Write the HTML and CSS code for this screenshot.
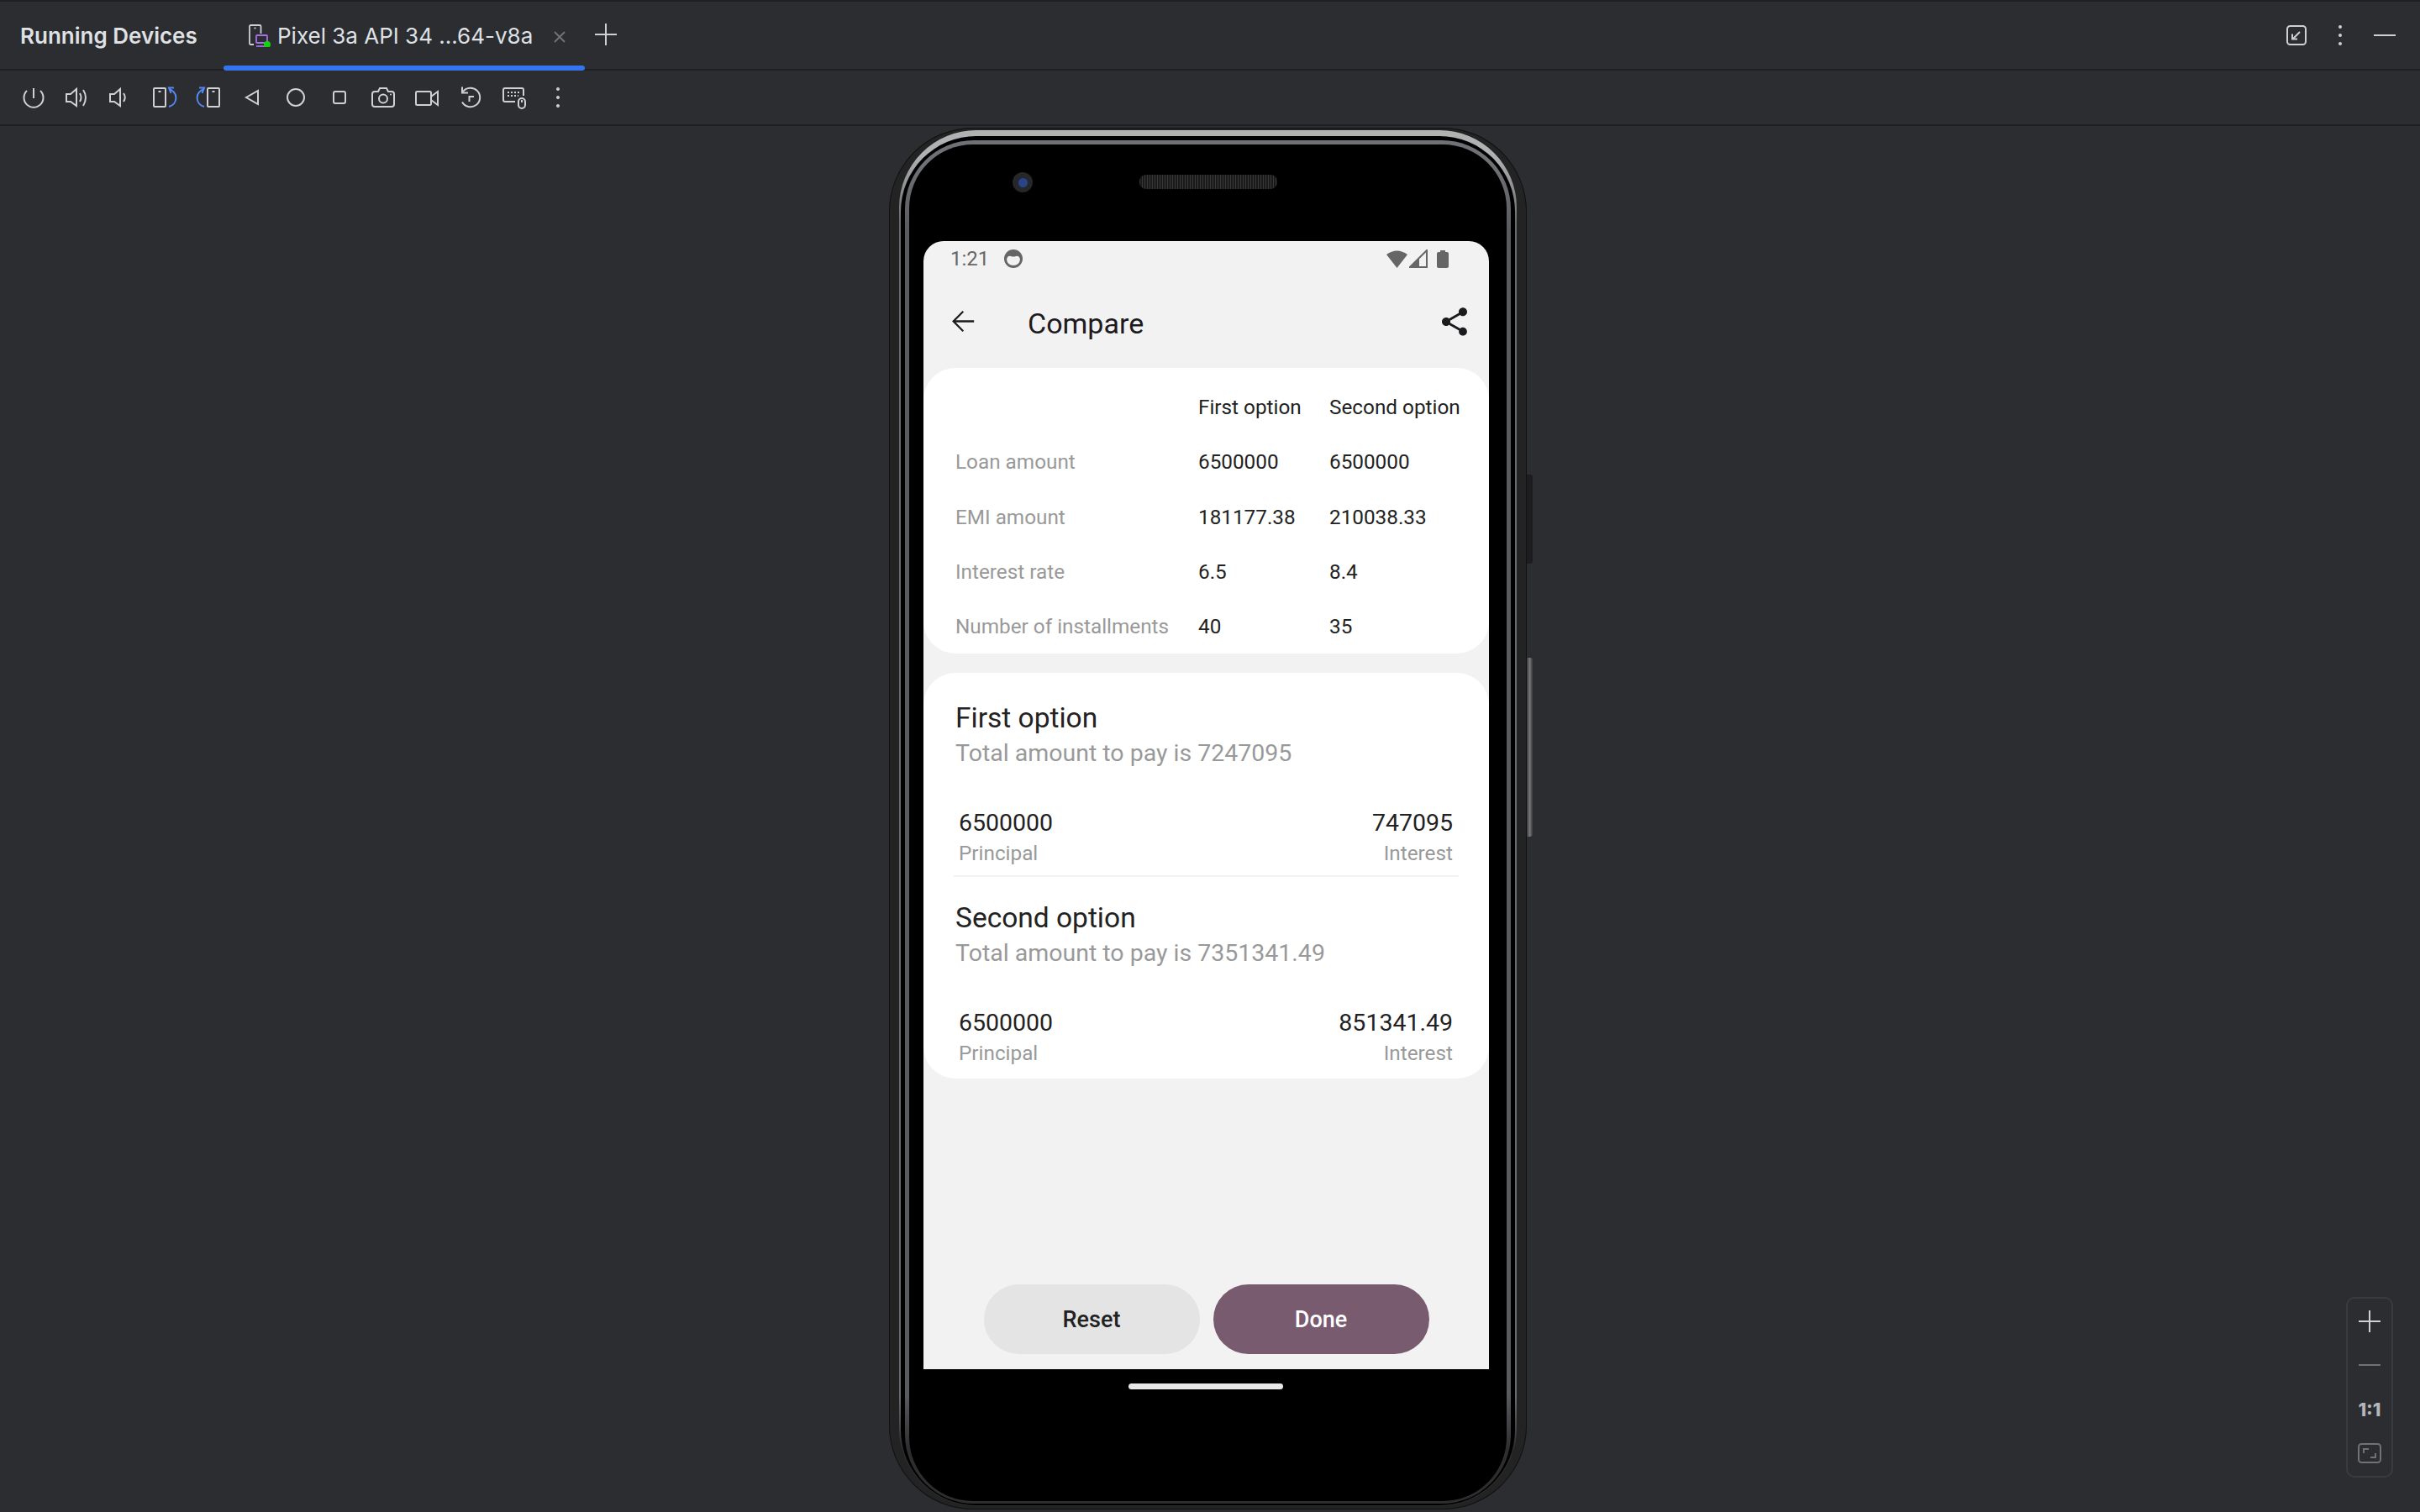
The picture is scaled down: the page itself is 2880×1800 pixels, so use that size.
FILE: index.html
```html
<!DOCTYPE html>
<html lang="en">
<head>
    <meta charset="UTF-8">
    <title>Running Devices</title>
    <link rel="stylesheet" href="styles.css">
</head>
<body>
    <header class="tabbar">
        <div class="tool-title">Running Devices</div>
        <div class="tab">
            <svg class="tab-icon" width="28" height="28" viewBox="0 0 28 28">
                <path class="ico thin" d="M8 25H4.500Q3 25 3 23.500V3.500Q3 2 4.500 2H15Q16.500 2 16.500 3.500V12"/>
                <path class="ico thin" d="M8.500 5.500H10.500"/>
                <rect class="ico thin purple" x="11" y="14" width="13" height="9" rx="1"/>
                <path class="ico thin purple" d="M11 27H21"/>
                <circle class="green-dot" cx="24" cy="25" r="4"/>
            </svg>
            <span class="tab-name">Pixel 3a API 34 ...64-v8a</span>
            <svg class="tab-close" width="18" height="18" viewBox="0 0 18 18"><path d="M3 3L15 15M15 3L3 15"/></svg>
        </div>
        <svg class="tab-add" width="26" height="26" viewBox="0 0 26 26"><path class="ico" d="M13 0V26M0 13H26"/></svg>
        <div class="tabbar-right">
            <svg width="24" height="24" viewBox="0 0 24 24">
                <rect class="ico" x="1" y="1" width="22" height="22" rx="3.500"/>
                <path class="ico" d="M16 8L7.500 16.500M7 10.500V16.500H13"/>
            </svg>
            <svg class="dots-small" width="8" height="26" viewBox="0 0 8 26"><circle cx="4" cy="3" r="2"/><circle cx="4" cy="13" r="2"/><circle cx="4" cy="23" r="2"/></svg>
            <svg width="26" height="4" viewBox="0 0 26 4"><path class="ico" d="M0 2H26"/></svg>
        </div>
    </header>

    <nav class="toolbar">
        <div class="tool"><svg viewBox="0 0 40 40"><path class="ico" d="M12 12A11.500 11.500 0 1 0 28 12M20 9V21"/></svg></div>
        <div class="tool"><svg viewBox="0 0 40 40"><path class="ico" d="M7 16H12L19 10V30L12 25H7Z"/><path class="ico" d="M23 15Q26 20 23 25M27 11Q33 20 27 30"/></svg></div>
        <div class="tool"><svg viewBox="0 0 40 40"><path class="ico" d="M7 16H12L19 10V30L12 25H7Z"/><path class="ico" d="M23 15Q26.500 20 23 25"/></svg></div>
        <div class="tool"><svg viewBox="0 0 40 40">
            <rect class="ico" x="7" y="9" width="14" height="22" rx="1"/><path class="ico" d="M12.500 13H15.500"/>
            <path class="ico blue" d="M25 10A12 11 0 0 1 25 31M31 8.500H25L27.500 15"/>
        </svg></div>
        <div class="tool"><svg viewBox="0 0 40 40"><g transform="matrix(-1 0 0 1 40 0)">
            <rect class="ico" x="7" y="9" width="14" height="22" rx="1"/><path class="ico" d="M12.500 13H15.500"/>
            <path class="ico blue" d="M25 10A12 11 0 0 1 25 31M31 8.500H25L27.500 15"/>
        </g></svg></div>
        <div class="tool"><svg viewBox="0 0 40 40"><path class="ico" d="M27 12V28L13 20Z"/></svg></div>
        <div class="tool"><svg viewBox="0 0 40 40"><circle class="ico" cx="20" cy="20" r="10"/></svg></div>
        <div class="tool"><svg viewBox="0 0 40 40"><rect class="ico" x="13" y="13" width="14" height="14" rx="2"/></svg></div>
        <div class="tool"><svg viewBox="0 0 40 40">
            <path class="ico" d="M14 13L16 9H24L26 13H30Q33 13 33 16V28Q33 31 30 31H10Q7 31 7 28V16Q7 13 10 13Z"/>
            <circle class="ico" cx="20" cy="21.500" r="5"/><circle class="dot-fill" cx="29" cy="16.500" r="1"/>
        </svg></div>
        <div class="tool"><svg viewBox="0 0 40 40"><rect class="ico" x="7" y="13" width="18" height="16" rx="1.500"/><path class="ico" d="M25 19L33 13V29L25 23"/></svg></div>
        <div class="tool"><svg viewBox="0 0 40 40"><path class="ico" d="M11 13A11.300 11.300 0 1 1 10 25.500M10 7.500V14.500H17M18.500 25V19H24"/></svg></div>
        <div class="tool"><svg viewBox="0 0 40 40">
            <path class="ico" d="M21 25H9Q7 25 7 23V11Q7 9 9 9H29Q31 9 31 11V18"/>
            <path class="ico dashed" d="M12 14H27M12 18H25"/>
            <rect class="ico" x="25" y="21" width="8" height="12" rx="4"/><path class="ico" d="M29 23V26"/>
        </svg></div>
        <div class="tool"><svg viewBox="0 0 40 40"><circle class="dot-fill" cx="20" cy="10" r="2"/><circle class="dot-fill" cx="20" cy="20" r="2"/><circle class="dot-fill" cx="20" cy="30" r="2"/></svg></div>
    </nav>

    <main class="device-area">
        <div class="phone">
            <div class="side-btn power"></div>
            <div class="side-btn volume"></div>
            <div class="rim">
                <div class="gap">
                    <div class="bevel">
                        <div class="face">
                            <div class="earpiece">
                                <div class="camera"><div class="lens"></div></div>
                                <div class="speaker"></div>
                            </div>

                            <div class="screen">
                                <div class="statusbar">
                                    <span class="clock">1:21</span>
                                    <svg class="face-icon" width="24" height="24" viewBox="0 0 24 24">
                                        <circle cx="12" cy="12" r="11" fill="#666"/>
                                        <path d="M4 13Q5 8 9 9Q12 10 15 9Q19 8 20 13Q19 20 12 20Q5 20 4 13Z" fill="#f2f2f2"/>
                                    </svg>
                                    <div class="status-right">
                                        <svg width="26" height="21" viewBox="0 0 26 21"><path d="M0 5Q12.500 -4 25 5L12.500 21Z" fill="#666"/></svg>
                                        <svg width="22" height="22" viewBox="0 0 22 22"><path d="M21 1V21H1Z" fill="none" stroke="#666" stroke-width="2"/><path d="M12 10V21H1Z" fill="#666"/></svg>
                                        <svg class="battery" width="14" height="21" viewBox="0 0 14 21"><path d="M4 2V0H10V2H12Q14 2 14 4V19Q14 21 12 21H2Q0 21 0 19V4Q0 2 2 2Z" fill="#666"/></svg>
                                    </div>
                                </div>

                                <div class="appbar">
                                    <svg class="back" width="41" height="41" viewBox="0 0 24 24"><path d="M20 11.200H7.300l5.600-5.600L12 4.700 4.700 12l7.300 7.300.9-.9-5.600-5.600H20z"/></svg>
                                    <div class="appbar-title">Compare</div>
                                    <svg class="share" width="40" height="40" viewBox="0 0 24 24"><path d="M18 16.080c-.76 0-1.440.3-1.960.77L8.910 12.700c.05-.23.09-.46.09-.7s-.04-.47-.09-.7l7.050-4.110c.54.5 1.250.81 2.040.81 1.660 0 3-1.340 3-3s-1.340-3-3-3-3 1.340-3 3c0 .24.04.47.09.7L8.040 9.810C7.500 9.310 6.790 9 6 9c-1.660 0-3 1.340-3 3s1.340 3 3 3c.79 0 1.500-.31 2.040-.81l7.120 4.160c-.05.21-.08.43-.08.65 0 1.610 1.310 2.920 2.920 2.920 1.610 0 2.920-1.310 2.920-2.920s-1.310-2.920-2.920-2.920z"/></svg>
                                </div>

                                <section class="card compare-table">
                                    <div></div><div class="val">First option</div><div class="val">Second option</div>
                                    <div class="lbl">Loan amount</div><div class="val">6500000</div><div class="val">6500000</div>
                                    <div class="lbl">EMI amount</div><div class="val">181177.38</div><div class="val">210038.33</div>
                                    <div class="lbl">Interest rate</div><div class="val">6.5</div><div class="val">8.4</div>
                                    <div class="lbl">Number of installments</div><div class="val">40</div><div class="val">35</div>
                                </section>

                                <section class="card breakdown">
                                    <div class="option">
                                        <div class="option-title">First option</div>
                                        <div class="option-total">Total amount to pay is 7247095</div>
                                        <div class="split">
                                            <div><div class="split-val">6500000</div><div class="split-lbl">Principal</div></div>
                                            <div class="split-end"><div class="split-val">747095</div><div class="split-lbl">Interest</div></div>
                                        </div>
                                    </div>
                                    <div class="divider"></div>
                                    <div class="option">
                                        <div class="option-title">Second option</div>
                                        <div class="option-total">Total amount to pay is 7351341.49</div>
                                        <div class="split">
                                            <div><div class="split-val">6500000</div><div class="split-lbl">Principal</div></div>
                                            <div class="split-end"><div class="split-val">851341.49</div><div class="split-lbl">Interest</div></div>
                                        </div>
                                    </div>
                                </section>

                                <div class="actions">
                                    <div class="btn btn-reset">Reset</div>
                                    <div class="btn btn-done">Done</div>
                                </div>
                            </div>

                            <div class="home-handle"></div>
                        </div>
                    </div>
                </div>
            </div>
        </div>

        <div class="zoom-panel">
            <svg width="26" height="26" viewBox="0 0 26 26"><path class="ico" d="M13 0V26M0 13H26"/></svg>
            <svg class="zoom-minus" width="26" height="2" viewBox="0 0 26 2"><path class="ico muted" d="M0 1H26"/></svg>
            <div class="zoom-actual">1:1</div>
            <svg class="zoom-fit" width="28" height="24" viewBox="0 0 28 24">
                <rect class="ico muted" x="1" y="1" width="26" height="22" rx="3.500"/>
                <path class="ico muted" d="M7 12V7H13M15 17H21V12"/>
            </svg>
        </div>
    </main>
</body>
</html>
```

FILE: styles.css
```css
* {
    box-sizing: border-box;
}

html, body {
    margin: 0;
    height: 100%;
    overflow: hidden;
}

body {
    background: #2b2d30;
    color: #dfe1e5;
    font-family: 'Inter', sans-serif;
    border-top: 2px solid #1e1f22;
}

/* svg strokes */
.ico {
    fill: none;
    stroke: #ced0d6;
    stroke-width: 2;
}

.ico.thin {
    stroke-width: 1.800;
}

.ico.blue {
    stroke: #548af7;
}

.ico.purple {
    stroke: #a571e6;
}

.ico.muted {
    stroke: #6f7277;
}

.ico.dashed {
    stroke-dasharray: 2 2;
}

.dot-fill, .dots-small circle {
    fill: #ced0d6;
}

.green-dot {
    fill: #0fd40f;
}

/* tab row */
.tabbar {
    display: flex;
    align-items: center;
    height: 82px;
    padding-left: 24px;
    border-bottom: 2px solid #1e1f22;
}

.tool-title {
    width: 242px;
    font-size: 26px;
    font-weight: 600;
}

.tab {
    position: relative;
    display: flex;
    align-items: center;
    width: 430px;
    height: 80px;
    padding-left: 28px;
}

.tab::after {
    content: "";
    position: absolute;
    left: 0;
    right: 0;
    bottom: -2px;
    height: 6px;
    border-radius: 3px;
    background: #3574f0;
}

.tab-name {
    margin-left: 8px;
    font-size: 26px;
    white-space: nowrap;
}

.tab-close {
    margin-left: 23px;
    margin-top: 4px;
}

.tab-close path {
    fill: none;
    stroke: #6f737a;
    stroke-width: 2;
}

.tab-add {
    margin-left: 12px;
    margin-top: -2px;
}

.tabbar-right {
    display: flex;
    align-items: center;
    gap: 36px;
    margin-left: auto;
    padding-right: 29px;
}

/* icon row */
.toolbar {
    display: flex;
    align-items: center;
    height: 66px;
    padding-left: 14px;
    border-bottom: 2px solid #1e1f22;
}

.tool {
    display: flex;
    justify-content: center;
    width: 52px;
}

.tool svg {
    width: 40px;
    height: 40px;
}

/* device */
.device-area {
    position: relative;
    display: flex;
    justify-content: center;
    height: 1650px;
    padding-top: 2px;
    padding-right: 5px;
}

.phone {
    position: relative;
    width: 759px;
    height: 1645px;
    padding: 3px 12px 4px;
    background: #232324;
    border-radius: 100px;
    box-shadow: inset 0 0 0 1px #111;
}

.side-btn {
    position: absolute;
    left: 759px;
    width: 7px;
    border-radius: 0 3px 3px 0;
}

.side-btn.power {
    top: 413px;
    height: 106px;
    background: #1d1d1f;
}

.side-btn.volume {
    top: 631px;
    height: 213px;
    background: linear-gradient(to right, #38383a, #77777a 50%, #38383a);
}

.rim {
    height: 100%;
    padding: 7px 2px 1px;
    background: linear-gradient(to bottom, #b0b1b3 0, #b0b1b3 30px, #6a6b6e 110px, #6a6b6e 92%, #2a2a2c 96%);
    border-radius: 92px;
}

.gap {
    height: 100%;
    padding: 5px 5px 2px;
    background: #000;
    border-radius: 90px;
}

.bevel {
    height: 100%;
    padding: 5px 5px 3px;
    background: linear-gradient(to bottom, #707176 0, #707176 30px, #5a5b5f 110px, #5a5b5f 92%, #2e2e30 96%);
    border-radius: 82px;
}

.face {
    display: flex;
    flex-direction: column;
    height: 100%;
    padding: 0 21px 0 17px;
    background: #000;
    border-radius: 76px;
}

.earpiece {
    position: relative;
    height: 115px;
    flex-shrink: 0;
}

.camera {
    position: absolute;
    left: 106px;
    top: 33px;
    display: flex;
    align-items: center;
    justify-content: center;
    width: 24px;
    height: 24px;
    border-radius: 50%;
    background: #26272b;
}

.lens {
    width: 11px;
    height: 11px;
    border-radius: 50%;
    background: #2a4488;
}

.speaker {
    position: absolute;
    left: 257px;
    top: 36px;
    width: 164px;
    height: 17px;
    border-radius: 8px;
    background: repeating-linear-gradient(90deg, #383838 0 1px, #1a1a1a 1px 3px);
}

/* app */
.screen {
    display: flex;
    flex-direction: column;
    height: 1343px;
    flex-shrink: 0;
    background: #f2f2f2;
    border-radius: 24px 24px 0 0;
    font-family: 'Roboto', sans-serif;
    color: #1d1b1e;
}

.statusbar {
    display: flex;
    align-items: center;
    height: 42px;
    padding: 0 48px 0 32px;
    color: #666;
}

.clock {
    font-size: 24px;
}

.face-icon {
    margin-left: 17px;
}

.status-right {
    display: flex;
    align-items: center;
    gap: 1px;
    margin-left: auto;
}

.battery {
    margin-left: 10px;
}

.appbar {
    display: flex;
    align-items: center;
    height: 109px;
    padding: 0 21px 0 26px;
}

.back {
    margin-top: -3px;
    fill: #1d1b1e;
}

.share {
    margin-top: -2px;
    margin-left: auto;
    fill: #1d1b1e;
}

.appbar-title {
    margin-left: 57px;
    font-size: 34px;
    line-height: 42px;
    margin-top: 3px;
}

.card {
    background: #fff;
    border-radius: 38px;
}

.compare-table {
    display: grid;
    grid-template-columns: 289px 156px 1fr;
    grid-auto-rows: 65.300px;
    align-items: center;
    height: 340px;
    padding: 14px 0 0 38px;
    font-size: 24.300px;
}

.lbl {
    color: #999;
}

.val {
    color: #222;
}

.breakdown {
    height: 483px;
    margin-top: 23px;
    padding: 33px 36px 0;
}

.option-title {
    padding-left: 2px;
    font-size: 33.500px;
    line-height: 42px;
    color: #222;
}

.option-total {
    padding-left: 2px;
    font-size: 28.500px;
    line-height: 42px;
    color: #999;
}

.split {
    display: flex;
    justify-content: space-between;
    margin-top: 44px;
    padding: 0 7px 0 6px;
}

.split-end {
    text-align: right;
}

.split-val {
    font-size: 28.500px;
    line-height: 36px;
    color: #222;
}

.split-lbl {
    font-size: 24.300px;
    line-height: 36px;
    color: #999;
}

.divider {
    height: 2px;
    margin: 8px 0 28px;
    background: #f2f2f2;
}

.actions {
    display: flex;
    justify-content: center;
    gap: 16px;
    margin-top: auto;
    margin-bottom: 18px;
}

.btn {
    display: flex;
    align-items: center;
    justify-content: center;
    width: 257px;
    height: 83px;
    padding-top: 1px;
    border-radius: 42px;
    font-size: 27px;
    font-weight: 500;
}

.btn-reset {
    background: #e4e4e4;
    color: #222;
}

.btn-done {
    background: #795b6f;
    color: #fff;
}

.home-handle {
    width: 184px;
    height: 7px;
    margin: 17px 0 0 244px;
    border-radius: 4px;
    background: #e8e8e8;
}

/* zoom controls */
.zoom-panel {
    position: absolute;
    right: 32px;
    bottom: 41px;
    display: flex;
    flex-direction: column;
    align-items: center;
    width: 56px;
    height: 215px;
    padding-top: 14px;
    border: 2px solid #393b40;
    border-radius: 10px;
}

.zoom-minus {
    margin-top: 38px;
}

.zoom-actual {
    margin-top: 40px;
    font-size: 22px;
    font-weight: 800;
    line-height: 24px;
    color: #b4b6bb;
}

.zoom-fit {
    margin-top: 28px;
}
```
